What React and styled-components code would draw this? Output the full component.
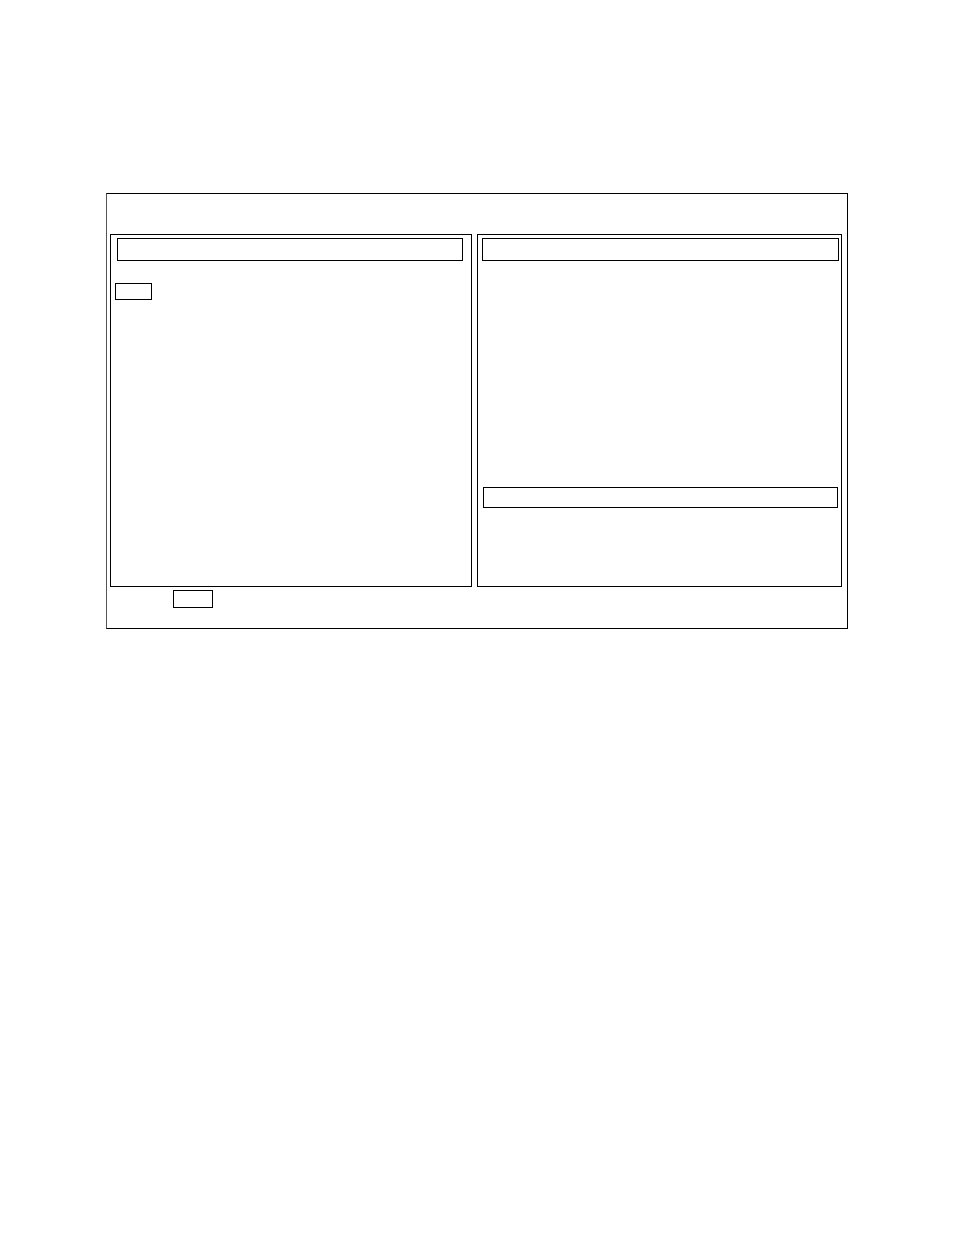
// Packages Imports
import styled, { createGlobalStyle } from "styled-components";

const styles = {
    line: '#000',
    softLine: '#555',
    background: '#fff',
}

const App = () => {
    return (
        <>
            <GlobalStyle />
            <StyledMain>
                <StyledFrame>
                    <StyledColumns>
                        <StyledPanel>
                            <StyledTitleBar $left="6px" $right="8px" />
                            <StyledTag />
                        </StyledPanel>

                        <StyledPanel>
                            <StyledTitleBar $left="4px" $right="2px" />
                            <StyledContent $height="226px" />
                            <StyledSubtitleBar />
                            <StyledContent $height="78px" />
                        </StyledPanel>
                    </StyledColumns>

                    <StyledFooter>
                        <StyledFooterBox />
                    </StyledFooter>
                </StyledFrame>
            </StyledMain>
        </>
    )
}

export default App

const GlobalStyle = createGlobalStyle`
    * {
        box-sizing: border-box;
    }

    body {
        margin: 0;
        background-color: ${styles.background};
        font-family: "Liberation Sans", sans-serif;
    }
`

const StyledMain = styled.main`
    min-height: 100vh;
    padding: 193px 106px;

    @media(max-width: 761px){
        padding: 40px 20px;
    }
`

const StyledFrame = styled.section`
    padding: 40px 5px 20px 3px;
    border: 1px solid ${styles.line};
    border-left-color: ${styles.softLine};
`

const StyledColumns = styled.div`
    display: grid;
    grid-template-columns: 362fr 365fr;
    gap: 5px;
`

const StyledPanel = styled.article`
    display: flex;
    flex-direction: column;
    padding-top: 3px;
    border: 1px solid ${styles.line};
`

const StyledTitleBar = styled.header`
    height: 23px;
    margin-left: ${({ $left }) => $left};
    margin-right: ${({ $right }) => $right};
    border: 1px solid ${styles.line};
`

const StyledSubtitleBar = styled.header`
    height: 21px;
    margin: 0 3px 0 5px;
    border: 1px solid ${styles.line};
`

const StyledContent = styled.div`
    min-height: ${({ $height }) => $height};
`

const StyledTag = styled.div`
    width: 37px;
    height: 17px;
    margin: 22px 0 0 4px;
    border: 1px solid ${styles.line};
`

const StyledFooter = styled.footer`
    display: flex;
    padding: 3px 0 0 63px;
`

const StyledFooterBox = styled.div`
    width: 40px;
    height: 18px;
    border: 1px solid ${styles.line};
`
